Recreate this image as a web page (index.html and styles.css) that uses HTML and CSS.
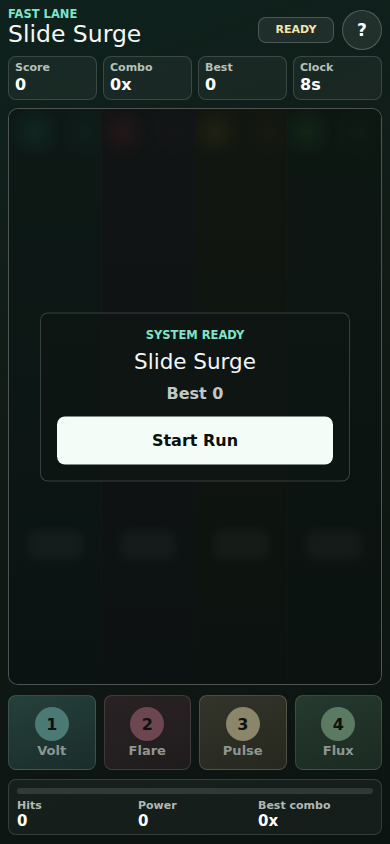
FILE: index.html
```html
<!DOCTYPE html>
<html lang="en">
<head>
  <meta charset="UTF-8">
  <title>Slide Surge - Fast Lane</title>
  <meta name="viewport" content="width=device-width, initial-scale=1.0">
  <link rel="stylesheet" href="styles.css">
</head>
<body>
  <div class="app">
    <header class="top">
      <div class="brand">
        <div class="eyebrow">FAST LANE</div>
        <h1>Slide Surge</h1>
      </div>
      <div class="actions">
        <span class="pill">READY</span>
        <button class="help">?</button>
      </div>
    </header>

    <div class="stats">
      <div class="stat"><span class="label">Score</span><span class="value">0</span></div>
      <div class="stat"><span class="label">Combo</span><span class="value">0x</span></div>
      <div class="stat"><span class="label">Best</span><span class="value">0</span></div>
      <div class="stat"><span class="label">Clock</span><span class="value">8s</span></div>
    </div>

    <div class="board">
      <div class="lanes">
        <div class="lane lane-volt"><div class="target"></div></div>
        <div class="lane lane-flare"><div class="target"></div></div>
        <div class="lane lane-pulse"><div class="target"></div></div>
        <div class="lane lane-flux"><div class="target"></div></div>
      </div>
      <div class="overlay">
        <div class="overlay-kicker">SYSTEM READY</div>
        <div class="overlay-title">Slide Surge</div>
        <div class="overlay-best">Best 0</div>
        <button class="start">Start Run</button>
      </div>
    </div>

    <div class="pads">
      <button class="pad pad-volt"><span class="num">1</span><span class="name">Volt</span></button>
      <button class="pad pad-flare"><span class="num">2</span><span class="name">Flare</span></button>
      <button class="pad pad-pulse"><span class="num">3</span><span class="name">Pulse</span></button>
      <button class="pad pad-flux"><span class="num">4</span><span class="name">Flux</span></button>
    </div>

    <div class="summary">
      <div class="meter"><div class="meter-fill"></div></div>
      <div class="totals">
        <div class="total"><span class="label">Hits</span><span class="value">0</span></div>
        <div class="total"><span class="label">Power</span><span class="value">0</span></div>
        <div class="total"><span class="label">Best combo</span><span class="value">0x</span></div>
      </div>
    </div>
  </div>
</body>
</html>
```

FILE: styles.css
```css
* { margin: 0; padding: 0; box-sizing: border-box; font-family: 'DejaVu Sans', 'Noto Sans', sans-serif; }

body {
  width: 390px;
  height: 844px;
  overflow: hidden;
  background: linear-gradient(160deg, #0e221e 0%, #121a15 45%, #0b1411 100%);
  color: #fff;
}

button { font-family: inherit; border: none; cursor: pointer; }

.app {
  height: 844px;
  display: flex;
  flex-direction: column;
  padding: 6px 8px 9px;
}

.top {
  display: flex;
  justify-content: space-between;
  align-items: center;
  height: 43px;
}

.eyebrow {
  font-size: 11.5px;
  line-height: 13px;
  font-weight: bold;
  color: #7fe3c9;
}

h1 {
  font-size: 23.5px;
  line-height: 27px;
  font-weight: normal;
  color: #f4f7f5;
}

.actions {
  display: flex;
  align-items: center;
  gap: 8px;
  padding-top: 4px;
}

.pill {
  display: flex;
  align-items: center;
  justify-content: center;
  width: 76px;
  height: 26px;
  border-radius: 8px;
  border: 1px solid rgba(255,255,255,0.2);
  background: rgba(255,255,255,0.07);
  color: #f3e3ad;
  font-size: 11px;
  font-weight: bold;
}

.help {
  width: 40px;
  height: 40px;
  border-radius: 50%;
  border: 1px solid rgba(255,255,255,0.22);
  background: rgba(255,255,255,0.08);
  color: #fff;
  font-size: 17px;
  font-weight: bold;
}

.stats {
  display: grid;
  grid-template-columns: repeat(4, 1fr);
  gap: 6px;
  margin-top: 7px;
}

.stat {
  height: 44px;
  border-radius: 8px;
  border: 1px solid rgba(255,255,255,0.15);
  background: rgba(255,255,255,0.045);
  padding: 4px 6px;
  display: flex;
  flex-direction: column;
}

.label {
  font-size: 11px;
  line-height: 14px;
  font-weight: bold;
  color: #b7c0ba;
}

.stat .value {
  font-size: 16px;
  line-height: 20px;
  font-weight: bold;
  color: #fff;
}

.board {
  position: relative;
  flex: 1;
  margin-top: 8px;
  border-radius: 10px;
  border: 1px solid rgba(255,255,255,0.28);
  background: #0c1211;
  overflow: hidden;
}

.lanes {
  display: grid;
  grid-template-columns: repeat(4, 1fr);
  height: 100%;
}

.lane {
  display: flex;
  flex-direction: column;
  justify-content: flex-end;
  align-items: center;
  padding-bottom: 124px;
  border-right: 1px solid rgba(255,255,255,0.012);
}

.lane-volt {
  background:
    radial-gradient(circle at 28% 4%, rgba(40,140,110,0.12), transparent 26px),
    radial-gradient(circle at 84% 4%, rgba(40,120,100,0.06), transparent 26px),
    linear-gradient(180deg, #0d1916, #0b1312);
}
.lane-flare {
  background:
    radial-gradient(circle at 22% 4%, rgba(140,40,50,0.14), transparent 26px),
    radial-gradient(circle at 78% 4%, rgba(70,60,100,0.06), transparent 26px),
    linear-gradient(180deg, #111414, #0c1111);
}
.lane-pulse {
  background:
    radial-gradient(circle at 22% 4%, rgba(130,110,40,0.12), transparent 26px),
    radial-gradient(circle at 78% 4%, rgba(110,80,40,0.06), transparent 26px),
    linear-gradient(180deg, #111610, #0c120f);
}
.lane-flux {
  background:
    radial-gradient(circle at 20% 4%, rgba(50,130,50,0.13), transparent 26px),
    radial-gradient(circle at 76% 4%, rgba(50,90,60,0.06), transparent 26px),
    linear-gradient(180deg, #0d1712, #0b1210);
}

.target {
  width: 56px;
  height: 30px;
  border-radius: 8px;
  background: rgba(255,255,255,0.035);
  filter: blur(5px);
}

.overlay {
  position: absolute;
  left: 50%;
  top: 50%;
  transform: translate(-50%, -50%);
  width: 310px;
  padding: 14px 16px 16px;
  border-radius: 8px;
  border: 1px solid rgba(255,255,255,0.18);
  background: rgba(14,22,20,0.92);
  text-align: center;
}

.overlay-kicker {
  font-size: 11.5px;
  line-height: 14px;
  font-weight: bold;
  color: #7fe3c9;
}

.overlay-title {
  margin-top: 6px;
  font-size: 21.5px;
  line-height: 27px;
  color: #f4f7f5;
}

.overlay-best {
  margin-top: 9px;
  font-size: 16px;
  line-height: 20px;
  font-weight: bold;
  color: #c3c8c5;
}

.start {
  display: block;
  width: 100%;
  height: 48px;
  margin-top: 13px;
  border-radius: 8px;
  background: #f3fcf7;
  color: #0a0f0d;
  font-size: 16px;
  font-weight: bold;
}

.pads {
  display: grid;
  grid-template-columns: repeat(4, 1fr);
  gap: 8px;
  margin-top: 10px;
}

.pad {
  height: 75px;
  border-radius: 8px;
  border: 1px solid rgba(255,255,255,0.13);
  display: flex;
  flex-direction: column;
  align-items: center;
  padding-top: 11px;
  gap: 1px;
}

.num {
  width: 34px;
  height: 34px;
  border-radius: 50%;
  display: flex;
  align-items: center;
  justify-content: center;
  font-size: 16px;
  font-weight: bold;
  color: #0d1210;
}

.name {
  font-size: 13px;
  line-height: 18px;
  font-weight: bold;
  color: #8d9792;
}

.pad-volt { background: linear-gradient(160deg, #25403c, #1a2d2a); }
.pad-volt .num { background: #4a7a73; }
.pad-flare { background: linear-gradient(160deg, #2a2224, #1f1c1d); }
.pad-flare .num { background: #6c4651; }
.pad-pulse { background: linear-gradient(160deg, #33342a, #26281f); border-color: rgba(255,255,220,0.16); }
.pad-pulse .num { background: #8b8569; }
.pad-flux { background: linear-gradient(160deg, #263a2e, #1b2a22); }
.pad-flux .num { background: #5a7b61; }

.summary {
  margin-top: 9px;
  height: 56px;
  border-radius: 8px;
  border: 1px solid rgba(255,255,255,0.14);
  background: rgba(255,255,255,0.04);
  padding: 8px 8px 0;
}

.meter {
  height: 6px;
  border-radius: 3px;
  background: rgba(255,255,255,0.12);
}

.meter-fill { width: 0; height: 100%; }

.totals {
  display: grid;
  grid-template-columns: 121px 120px 1fr;
  margin-top: 5px;
}

.total {
  display: flex;
  flex-direction: column;
}

.total .label { color: #b0b9b3; }

.total .value {
  font-size: 15px;
  line-height: 17px;
  font-weight: bold;
  color: #fff;
}
```
